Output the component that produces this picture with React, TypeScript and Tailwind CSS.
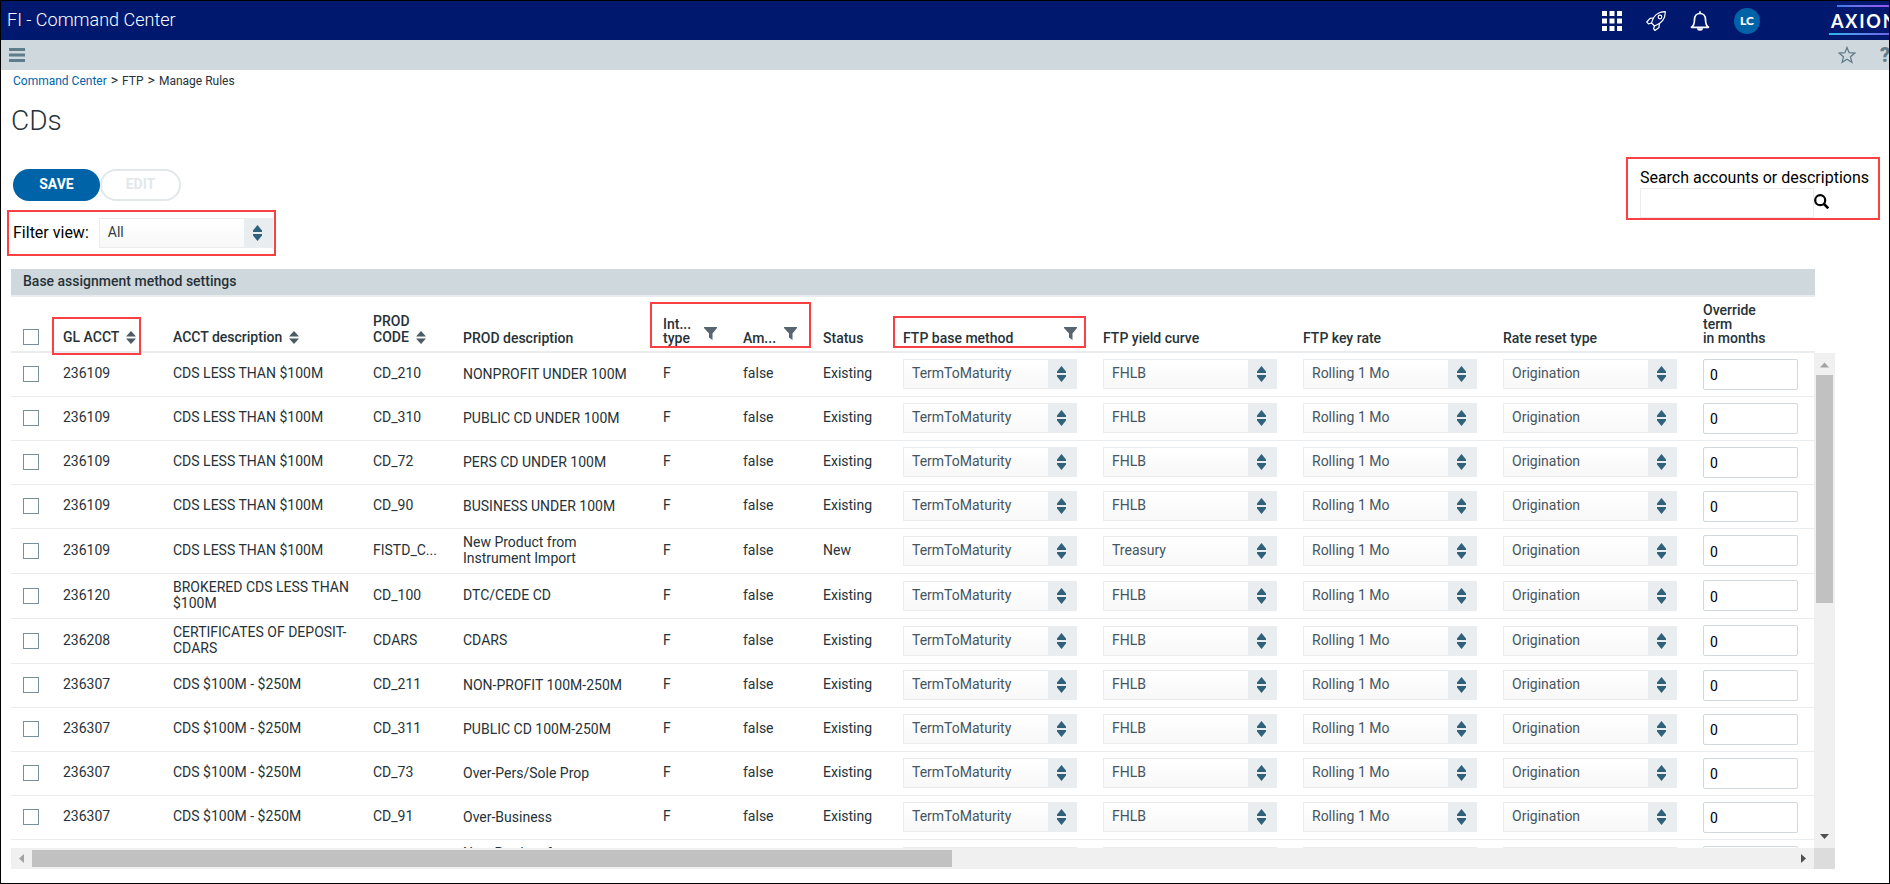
import { useState } from 'react'
import type { ReactNode } from 'react'

type Rule = {
  gl: string
  acct: string
  code: string
  prod: string
  status: string
  curve: string
}

const LESS = 'CDS LESS THAN $100M'
const OVER = 'CDS $100M - $250M'

const rules: Rule[] = [
  { gl: '236109', acct: LESS, code: 'CD_210', prod: 'NONPROFIT UNDER 100M', status: 'Existing', curve: 'FHLB' },
  { gl: '236109', acct: LESS, code: 'CD_310', prod: 'PUBLIC CD UNDER 100M', status: 'Existing', curve: 'FHLB' },
  { gl: '236109', acct: LESS, code: 'CD_72', prod: 'PERS CD UNDER 100M', status: 'Existing', curve: 'FHLB' },
  { gl: '236109', acct: LESS, code: 'CD_90', prod: 'BUSINESS UNDER 100M', status: 'Existing', curve: 'FHLB' },
  { gl: '236109', acct: LESS, code: 'FISTD_C...', prod: 'New Product from Instrument Import', status: 'New', curve: 'Treasury' },
  { gl: '236120', acct: 'BROKERED CDS LESS THAN $100M', code: 'CD_100', prod: 'DTC/CEDE CD', status: 'Existing', curve: 'FHLB' },
  { gl: '236208', acct: 'CERTIFICATES OF DEPOSIT- CDARS', code: 'CDARS', prod: 'CDARS', status: 'Existing', curve: 'FHLB' },
  { gl: '236307', acct: OVER, code: 'CD_211', prod: 'NON-PROFIT 100M-250M', status: 'Existing', curve: 'FHLB' },
  { gl: '236307', acct: OVER, code: 'CD_311', prod: 'PUBLIC CD 100M-250M', status: 'Existing', curve: 'FHLB' },
  { gl: '236307', acct: OVER, code: 'CD_73', prod: 'Over-Pers/Sole Prop', status: 'Existing', curve: 'FHLB' },
  { gl: '236307', acct: OVER, code: 'CD_91', prod: 'Over-Business', status: 'Existing', curve: 'FHLB' },
  { gl: '236307', acct: OVER, code: 'FISTD_C...', prod: 'New Product from Instrument Import', status: 'New', curve: 'FHLB' },
]

function SortIcon() {
  return (
    <svg viewBox="0 0 10 13" className="mb-px inline-block h-[13px] w-[10px]" fill="#4b5b66" aria-hidden="true">
      <path d="M5 0L10 5.5H0zM5 13L0 7.5H10z" />
    </svg>
  )
}

function FilterIcon() {
  return (
    <svg viewBox="0 0 13 13" className="mb-[5px] h-[13px] w-[13px]" fill="#56656f" aria-hidden="true">
      <path d="M0 0h13v1L8.5 6.500V13L5 10.500v-4L0 1z" />
    </svg>
  )
}

function Select({ label, id, options, dark }: { label?: string; id?: string; options: string[]; dark?: boolean }) {
  return (
    <div className="relative h-[30px] w-[174px]">
      <select
        id={id}
        aria-label={label}
        className={`h-full w-full appearance-none border border-[#e9edf0] bg-linear-to-b from-white to-[#f8f8f8] pb-[2px] pl-2 text-sm ${dark ? 'text-[#333b42]' : 'text-[#455560]'}`}
      >
        {options.map((o) => (
          <option key={o}>{o}</option>
        ))}
      </select>
      <span className="pointer-events-none absolute inset-y-0 right-0 flex w-[29px] items-center justify-center bg-[#e9edf0] pr-[2px]">
        <svg viewBox="0 0 9 16" className="h-4 w-[9px]" fill="#2f617b" aria-hidden="true">
          <path d="M4.500 0L9 5.500V7H0V5.500zM4.500 16L0 10.500V9H9v1.500z" />
        </svg>
      </span>
    </div>
  )
}

function Checkbox({ label }: { label: string }) {
  return (
    <input
      type="checkbox"
      aria-label={label}
      className="block h-4 w-4 appearance-none border border-[#78909c] bg-white checked:bg-[#0063a7]"
    />
  )
}

function Columns() {
  return (
    <colgroup>
      <col className="w-[39px]" />
      <col className="w-[110px]" />
      <col className="w-[200px]" />
      <col className="w-[90px]" />
      <col className="w-[200px]" />
      <col className="w-[80px]" />
      <col className="w-[80px]" />
      <col className="w-[80px]" />
      <col className="w-[200px]" />
      <col className="w-[200px]" />
      <col className="w-[200px]" />
      <col className="w-[200px]" />
      <col />
    </colgroup>
  )
}

function Th({ children }: { children: ReactNode }) {
  return <th className="relative pb-[6px] pl-[13px] text-left align-bottom font-medium">{children}</th>
}

function Td({ children }: { children: ReactNode }) {
  return <td className="pb-[2px] pl-[13px] align-middle">{children}</td>
}

function ControlTd({ children }: { children: ReactNode }) {
  return <td className="pl-[13px] align-middle">{children}</td>
}

// rows whose description wraps are a pixel taller
function rowHeight(i: number) {
  if (i === 0) return 'h-[43px]'
  return (i >= 4 && i <= 6) || i === 11 ? 'h-[45px]' : 'h-11'
}

function TopBar() {
  return (
    <header className="flex h-[39px] shrink-0 items-center justify-between overflow-hidden bg-[#00196e] pl-[6px] text-white">
      <span className="pb-[2px] text-lg font-light">FI - Command Center</span>
      <div className="flex h-full items-center">
        <button aria-label="Apps" className="mr-6">
          <svg viewBox="0 0 20 20" className="h-5 w-5" fill="white">
            <path d="M0 0h5v5H0zM7.500 0h5v5h-5zM15 0h5v5h-5zM0 7.500h5v5H0zM7.500 7.500h5v5h-5zM15 7.500h5v5h-5zM0 15h5v5H0zM7.500 15h5v5h-5zM15 15h5v5h-5z" />
          </svg>
        </button>
        <button aria-label="Launch" className="mr-6">
          <svg viewBox="0 0 20 20" className="h-5 w-5" fill="none" stroke="white" strokeWidth="1.200" strokeLinejoin="round" strokeLinecap="round">
            <path d="M5.500 12C6.500 6 11 1 19.300.700 19.500 8.500 14 13 8.500 15z" />
            <path d="M7.500 7L4 7.300.800 11l1.700 1.800 3-.800M13.300 12.700l-.300 3.800L9 19.500l-1.500-1.800 1-2.700" />
            <circle cx="14" cy="6" r="1.800" />
          </svg>
        </button>
        <button aria-label="Notifications" className="mr-6">
          <svg viewBox="0 0 20 20" className="h-5 w-5" fill="none" stroke="white" strokeWidth="1.700" strokeLinejoin="round">
            <path d="M1.500 16.300C4 14.500 4.500 12.500 4.500 8.500 4.500 5 6.800 2.500 10 2.500s5.500 2.500 5.500 6c0 4 .500 6 3 7.800z" />
            <path d="M10 .300v2" />
            <path d="M7 17.300a3 2.500 0 0 0 6 0z" fill="white" stroke="none" />
          </svg>
        </button>
        <button className="mr-[69px] h-[26px] w-[26px] rounded-full bg-[#0063a7] font-['Lato',sans-serif] text-xs font-black">LC</button>
        <a href="#" className="relative flex h-full w-[60px] items-center font-['Lato',sans-serif]">
          <span className="absolute top-1 right-0 left-2 h-[2px] bg-linear-to-r from-[#3c7de8] to-[#9b51f0]" />
          <span className="pl-[2px] text-lg font-bold tracking-widest">AXION</span>
          <span className="absolute right-0 bottom-[5px] left-0 h-[2px] bg-linear-to-r from-[#27b4ea] to-[#6f62e8]" />
        </a>
      </div>
    </header>
  )
}

function SubBar() {
  return (
    <div className="flex h-[30px] shrink-0 items-center justify-between overflow-hidden bg-[#cfd8dd] pl-2 text-[#607d8b]">
      <button aria-label="Menu">
        <svg viewBox="0 0 16 14" className="h-[14px] w-4" fill="currentColor">
          <path d="M0 0h16v3H0zM0 5.500h16v3H0zM0 11h16v3H0z" />
        </svg>
      </button>
      <div className="flex items-center">
        <button aria-label="Favorite" className="mr-6">
          <svg viewBox="0 0 18 18" className="h-[18px] w-[18px]" fill="none" stroke="currentColor" strokeWidth="1.300">
            <path d="M9 1.500l2.100 5.200 5.700.400-4.300 3.700 1.400 5.500L9 13.300l-4.900 3 1.400-5.500L1.200 7.100l5.700-.400z" />
          </svg>
        </button>
        <button className="w-[9px] text-xl leading-5 font-black" aria-label="Help">?</button>
      </div>
    </div>
  )
}

export default function App() {
  const [query, setQuery] = useState('')

  return (
    <div className="flex h-screen flex-col overflow-hidden border border-black bg-white font-['Roboto',sans-serif] text-sm text-[#263238]">
      <TopBar />
      <SubBar />

      {/* Breadcrumb */}
      <nav className="flex gap-1 pt-[2px] pl-3 text-xs leading-[18px]">
        <a href="#" className="text-[#0063a7]">Command Center</a>
        <span className="text-sm leading-4">&gt;</span>
        <span>FTP</span>
        <span className="text-sm leading-4">&gt;</span>
        <span>Manage Rules</span>
      </nav>

      <h1 className="mt-[13px] pl-[10px] text-[28px] leading-9 font-light">CDs</h1>

      {/* Actions, filter and search */}
      <div className="mt-[18px] flex shrink-0 justify-between pr-[9px] pl-[6px]">
        <div>
          <div className="flex pt-3 pl-[6px]">
            <button className="h-8 w-[87px] rounded-full bg-[#0063a7] pb-[2px] font-bold text-white">SAVE</button>
            <button className="h-8 w-[81px] rounded-full border-2 border-[#e2e8ea] pb-[2px] font-bold text-[#e2e8ea]">EDIT</button>
          </div>
          <div className="mt-[9px] flex h-[46px] items-center border-2 border-[#f94144] pr-px pl-1">
            <label htmlFor="view" className="mr-[10px] text-base text-black">Filter view:</label>
            <Select id="view" options={['All', 'New', 'Existing']} dark />
          </div>
        </div>
        <div className="h-[63px] border-2 border-[#f94144] pt-[9px] pr-[9px] pl-3">
          <label htmlFor="search" className="block text-base leading-5 text-black">Search accounts or descriptions</label>
          <div className="flex items-center">
            <input
              id="search"
              value={query}
              onChange={(e) => setQuery(e.target.value)}
              className="h-[30px] w-[174px] border border-[#e9edf0] px-2"
            />
            <button aria-label="Search" className="pb-1">
              <svg viewBox="0 0 15 15" className="h-[15px] w-[15px]" fill="none" stroke="black" strokeWidth="2.200">
                <circle cx="6.200" cy="6.200" r="5" />
                <path d="M10 10l4.300 4.300" strokeWidth="2.600" />
              </svg>
            </button>
          </div>
        </div>
      </div>

      {/* Rules grid */}
      <section className="mt-[13px] mr-[54px] mb-[14px] ml-[10px] flex min-h-0 flex-1 flex-col">
        <h2 className="mr-5 h-7 shrink-0 border-b-2 border-[#e9edf0] bg-[#cfd8dd] pl-3 leading-[25px] font-medium">
          Base assignment method settings
        </h2>
        <div className="mr-5 shrink-0">
          <table className="h-[56px] w-full table-fixed border-b-2 border-[#e9edf0] leading-[14px]">
            <Columns />
            <thead>
              <tr>
                <th className="pb-[6px] pl-3 align-bottom">
                  <Checkbox label="Select all" />
                </th>
                <Th>
                  <span className="mr-[7px]">GL ACCT</span>
                  <SortIcon />
                  <span className="absolute -bottom-1 left-[2px] h-[38px] w-[89px] border-2 border-[#f94144]" />
                </Th>
                <Th>
                  <span className="mr-[7px]">ACCT description</span>
                  <SortIcon />
                </Th>
                <Th>
                  <div className="leading-4">
                    PROD
                    <br />
                    <span className="mr-[7px]">CODE</span>
                    <SortIcon />
                  </div>
                </Th>
                <Th>PROD description</Th>
                <Th>
                  <div className="flex items-end gap-[13px]">
                    <span>
                      Int...
                      <br />
                      type
                    </span>
                    <FilterIcon />
                  </div>
                  <span className="absolute bottom-[3px] left-0 h-[46px] w-[161px] border-2 border-[#f94144]" />
                </Th>
                <Th>
                  <div className="flex items-end gap-2">
                    Am...
                    <FilterIcon />
                  </div>
                </Th>
                <Th>Status</Th>
                <Th>
                  <div className="flex items-end justify-between pr-[13px]">
                    FTP base method
                    <FilterIcon />
                  </div>
                  <span className="absolute bottom-[3px] left-[3px] h-8 w-[193px] border-2 border-[#f94144]" />
                </Th>
                <Th>FTP yield curve</Th>
                <Th>FTP key rate</Th>
                <Th>Rate reset type</Th>
                <Th>
                  Override
                  <br />
                  term
                  <br />
                  in months
                </Th>
              </tr>
            </thead>
          </table>
        </div>

        <div className="flex min-h-0 flex-1">
          <div className="min-w-0 flex-1 overflow-hidden">
            <table className="w-full table-fixed leading-4">
              <Columns />
              <tbody>
                {rules.map((r, i) => (
                  <tr key={i} className={`border-b border-[#e9edf0] ${rowHeight(i)}`}>
                    <td className="pl-3 align-middle">
                      <Checkbox label={`Select ${r.gl} ${r.code}`} />
                    </td>
                    <Td>{r.gl}</Td>
                    <Td>{r.acct}</Td>
                    <Td>{r.code}</Td>
                    <td className="pr-5 pb-px pl-[13px] align-middle">{r.prod}</td>
                    <Td>F</Td>
                    <Td>false</Td>
                    <Td>{r.status}</Td>
                    <ControlTd>
                      <Select label="FTP base method" options={['TermToMaturity']} />
                    </ControlTd>
                    <ControlTd>
                      <Select label="FTP yield curve" options={[r.curve]} />
                    </ControlTd>
                    <ControlTd>
                      <Select label="FTP key rate" options={['Rolling 1 Mo']} />
                    </ControlTd>
                    <ControlTd>
                      <Select label="Rate reset type" options={['Origination']} />
                    </ControlTd>
                    <ControlTd>
                      <input
                        defaultValue="0"
                        aria-label="Override term in months"
                        className="block h-[31px] w-[95px] rounded-xs border border-[#cfd8dd] px-[6px] pt-[2px] text-black"
                      />
                    </ControlTd>
                  </tr>
                ))}
              </tbody>
            </table>
          </div>
          <div className="flex w-[21px] shrink-0 flex-col items-center bg-[#f0f0f0]">
            <svg viewBox="0 0 21 22" className="h-[22px] w-[21px] shrink-0" fill="#a3a3a3" aria-hidden="true">
              <path d="M10.500 9.500l4.500 5H6z" />
            </svg>
            <div className="h-[46%] w-[17px] bg-[#c1c1c1]" />
            <svg viewBox="0 0 21 22" className="mt-auto h-[22px] w-[21px] shrink-0" fill="#505050" aria-hidden="true">
              <path d="M10.500 13l4.500-5H6z" />
            </svg>
          </div>
        </div>
        <div className="flex h-[21px] shrink-0">
          <div className="flex flex-1 items-center bg-[#f0f0f0]">
            <svg viewBox="0 0 21 21" className="h-[21px] w-[21px] shrink-0" fill="#a3a3a3" aria-hidden="true">
              <path d="M8 10.500l5-4.500v9z" />
            </svg>
            <div className="h-[17px] w-[51%] bg-[#c1c1c1]" />
            <svg viewBox="0 0 21 21" className="ml-auto h-[21px] w-[21px] shrink-0" fill="#505050" aria-hidden="true">
              <path d="M13 10.500L8 6v9z" />
            </svg>
          </div>
          <div className="w-[21px] bg-[#dcdcdc]" />
        </div>
      </section>
    </div>
  )
}
